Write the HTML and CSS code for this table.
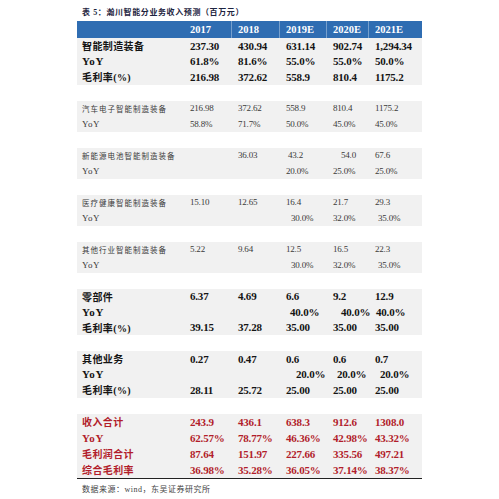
FILE: index.html
```html
<!DOCTYPE html>
<html lang="zh-CN">
<head>
<meta charset="utf-8">
<title>表5</title>
<link rel="stylesheet" href="styles.css">
</head>
<body>
<div class="page">
  <div class="title">表 5：瀚川智能分业务收入预测（百万元）</div>
  <div class="tbl">
    <div class="row head">
      <div class="c lab"></div>
      <div class="c">2017</div>
      <div class="c dv">2018</div>
      <div class="c dv">2019E</div>
      <div class="c dv">2020E</div>
      <div class="c dv">2021E</div>
    </div>

    <div class="block">
      <div class="row b"><div class="c lab">智能制造装备</div><div class="c">237.30</div><div class="c">430.94</div><div class="c">631.14</div><div class="c">902.74</div><div class="c">1,294.34</div></div>
      <div class="row b"><div class="c lab en">YoY</div><div class="c">61.8%</div><div class="c">81.6%</div><div class="c">55.0%</div><div class="c">55.0%</div><div class="c">50.0%</div></div>
      <div class="row b"><div class="c lab">毛利率(%)</div><div class="c">216.98</div><div class="c">372.62</div><div class="c">558.9</div><div class="c">810.4</div><div class="c">1175.2</div></div>
    </div>

    <div class="block">
      <div class="row n"><div class="c lab">汽车电子智能制造装备</div><div class="c">216.98</div><div class="c">372.62</div><div class="c">558.9</div><div class="c">810.4</div><div class="c">1175.2</div></div>
      <div class="row n"><div class="c lab en">YoY</div><div class="c">58.8%</div><div class="c">71.7%</div><div class="c">50.0%</div><div class="c">45.0%</div><div class="c">45.0%</div></div>
    </div>

    <div class="block">
      <div class="row n"><div class="c lab">新能源电池智能制造装备</div><div class="c"></div><div class="c">36.03</div><div class="c p9">43.2</div><div class="c p15">54.0</div><div class="c">67.6</div></div>
      <div class="row n"><div class="c lab en">YoY</div><div class="c"></div><div class="c"></div><div class="c">20.0%</div><div class="c">25.0%</div><div class="c">25.0%</div></div>
    </div>

    <div class="block">
      <div class="row n"><div class="c lab">医疗健康智能制造装备</div><div class="c">15.10</div><div class="c">12.65</div><div class="c">16.4</div><div class="c">21.7</div><div class="c">29.3</div></div>
      <div class="row n"><div class="c lab en">YoY</div><div class="c"></div><div class="c"></div><div class="c p12">30.0%</div><div class="c">32.0%</div><div class="c p10">35.0%</div></div>
    </div>

    <div class="block">
      <div class="row n"><div class="c lab">其他行业智能制造装备</div><div class="c">5.22</div><div class="c">9.64</div><div class="c">12.5</div><div class="c">16.5</div><div class="c">22.3</div></div>
      <div class="row n"><div class="c lab en">YoY</div><div class="c"></div><div class="c"></div><div class="c p12">30.0%</div><div class="c">32.0%</div><div class="c p10">35.0%</div></div>
    </div>

    <div class="block">
      <div class="row b"><div class="c lab">零部件</div><div class="c">6.37</div><div class="c">4.69</div><div class="c">6.6</div><div class="c">9.2</div><div class="c">12.9</div></div>
      <div class="row b"><div class="c lab en">YoY</div><div class="c"></div><div class="c"></div><div class="c p11">40.0%</div><div class="c p15">40.0%</div><div class="c p8">40.0%</div></div>
      <div class="row b"><div class="c lab">毛利率(%)</div><div class="c">39.15</div><div class="c">37.28</div><div class="c">35.00</div><div class="c">35.00</div><div class="c">35.00</div></div>
    </div>

    <div class="block">
      <div class="row b"><div class="c lab">其他业务</div><div class="c">0.27</div><div class="c">0.47</div><div class="c">0.6</div><div class="c">0.6</div><div class="c">0.7</div></div>
      <div class="row b"><div class="c lab en">YoY</div><div class="c"></div><div class="c"></div><div class="c p17">20.0%</div><div class="c p11">20.0%</div><div class="c p12">20.0%</div></div>
      <div class="row b"><div class="c lab">毛利率(%)</div><div class="c">28.11</div><div class="c">25.72</div><div class="c">25.00</div><div class="c">25.00</div><div class="c">25.00</div></div>
    </div>

    <div class="block total">
      <div class="row b r"><div class="c lab">收入合计</div><div class="c">243.9</div><div class="c">436.1</div><div class="c">638.3</div><div class="c">912.6</div><div class="c">1308.0</div></div>
      <div class="row b r"><div class="c lab en">YoY</div><div class="c">62.57%</div><div class="c">78.77%</div><div class="c">46.36%</div><div class="c">42.98%</div><div class="c">43.32%</div></div>
      <div class="row b r"><div class="c lab">毛利润合计</div><div class="c">87.64</div><div class="c">151.97</div><div class="c">227.66</div><div class="c">335.56</div><div class="c">497.21</div></div>
      <div class="row b r"><div class="c lab">综合毛利率</div><div class="c">36.98%</div><div class="c">35.28%</div><div class="c">36.05%</div><div class="c">37.14%</div><div class="c">38.37%</div></div>
    </div>
  </div>
  <div class="source">数据来源：wind，东吴证券研究所</div>
</div>
</body>
</html>
```
FILE: styles.css
```css
html, body {
  margin: 0;
  padding: 0;
  background: #ffffff;
}
.page {
  width: 499px;
  height: 499px;
  padding: 8px 0 0 77px;
  box-sizing: border-box;
  font-family: "Liberation Serif", "Noto Sans CJK SC", serif;
}
.title {
  padding-left: 5px;
  font-size: 8px;
  line-height: 10px;
  font-weight: bold;
  color: #1d2440;
  letter-spacing: 0.6px;
  height: 13px;
}
.tbl {
  width: 345px;
  display: flex;
  flex-direction: column;
}
.row {
  display: grid;
  grid-template-columns: 106px 48px 48px 47px 42px 54px;
  height: 15.5px;
  align-items: center;
  white-space: nowrap;
}
.c {
  padding-left: 7px;
}
.c.lab {
  padding-left: 5px;
}
.head {
  height: 17px;
  background: #2f6db2;
  color: #ffffff;
  font-weight: bold;
  font-size: 10.5px;
  align-items: stretch;
}
.head .c {
  display: flex;
  align-items: center;
}
.head .dv {
  border-left: 1px solid rgba(255, 255, 255, 0.35);
  padding-left: 6px;
}
.block {
  background: #f1f1f1;
  margin-bottom: 16px;
}
.block:first-of-type {
  margin-bottom: 15px;
}
.row.b {
  font-size: 11px;
  font-weight: bold;
  color: #141414;
  letter-spacing: -0.2px;
}
.row.b .lab {
  font-size: 10px;
  letter-spacing: 0.4px;
}
.row.b .lab.en {
  font-size: 11px;
  letter-spacing: 0.6px;
}
.row.n {
  font-size: 9px;
  color: #3a3a3a;
  letter-spacing: -0.2px;
}
.row.n .lab {
  font-size: 7.5px;
  letter-spacing: 1px;
}
.row.n .lab.en {
  font-size: 9px;
  letter-spacing: 0.4px;
}
.row.r {
  color: #b21d2b;
}
.total {
  margin-bottom: 0;
  border-bottom: 1.5px solid #222222;
}
.total .row {
  height: 16px;
}
.p8 { padding-left: 8px; }
.p9 { padding-left: 9px; }
.p10 { padding-left: 10px; }
.p11 { padding-left: 11px; }
.p12 { padding-left: 12px; }
.p15 { padding-left: 15px; }
.p17 { padding-left: 17px; }
.source {
  padding-left: 5px;
  margin-top: 4px;
  font-size: 8px;
  letter-spacing: 0.5px;
  color: #444444;
}
```
